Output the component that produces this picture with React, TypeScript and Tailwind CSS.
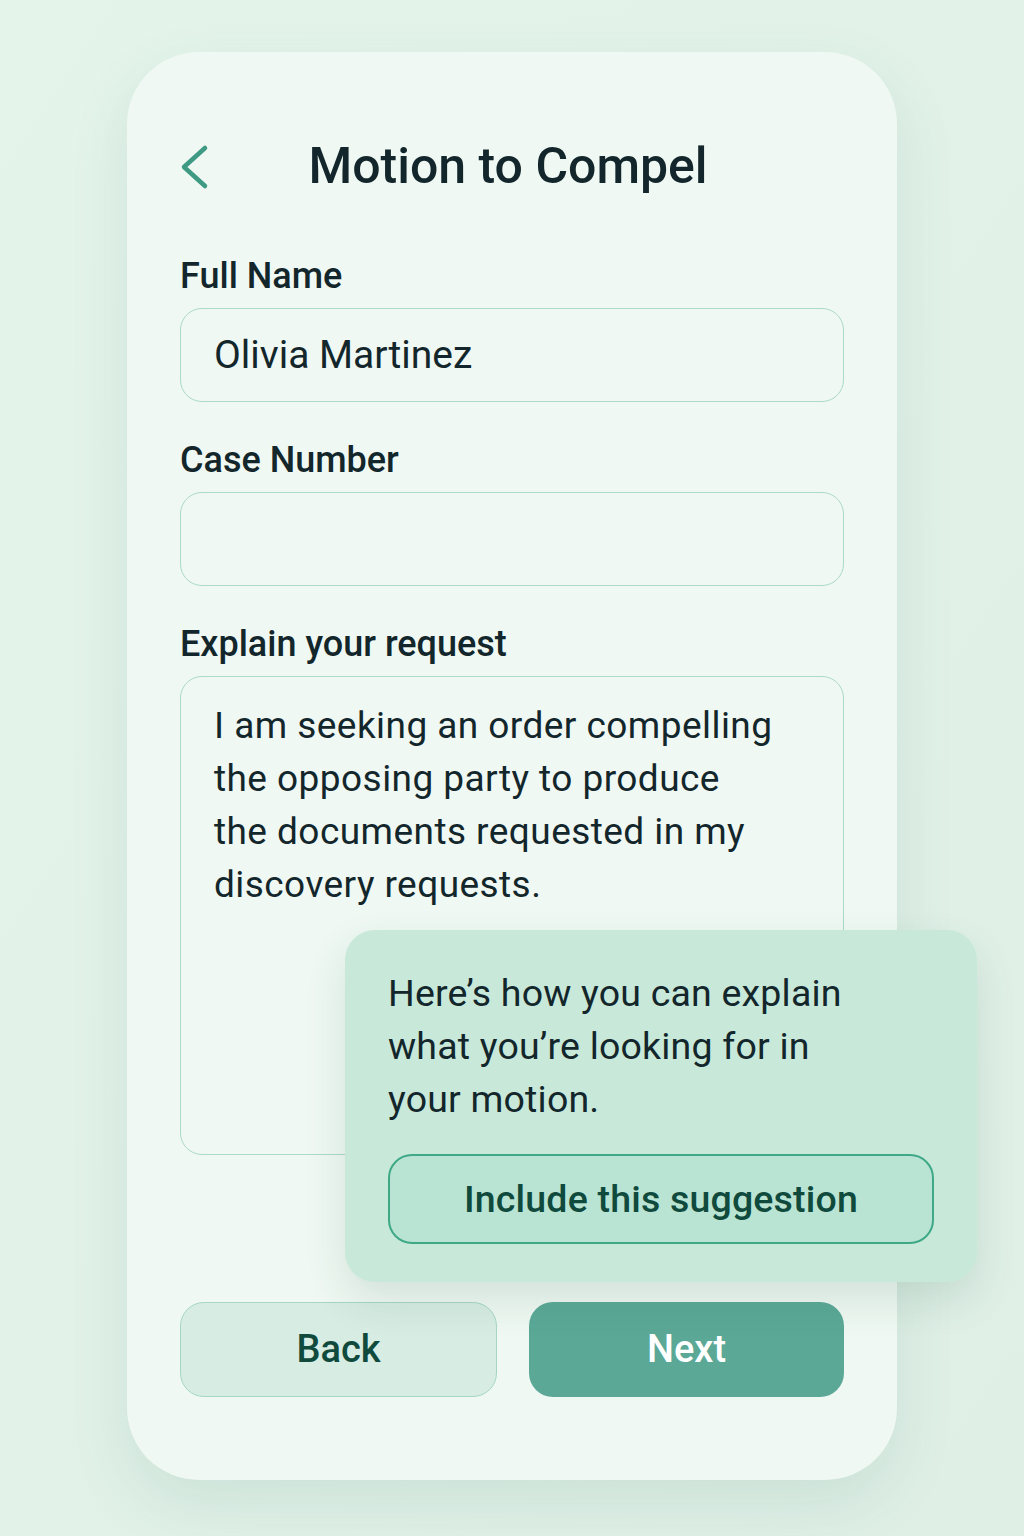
const Field = ({ label, children }: { label: string; children: React.ReactNode }) => (
  <div className="mt-[39px] first:mt-0">
    <div className="h-[38px] text-[36px] leading-[38px] font-medium text-[#13262b]">{label}</div>
    <div className="mt-[13px]">{children}</div>
  </div>
)

const App = () => {
  const request = [
    "I am seeking an order compelling",
    "the opposing party to produce",
    "the documents requested in my",
    "discovery requests.",
  ]
  const tip = ["Here’s how you can explain", "what you’re looking for in", "your motion."]

  return (
    <div
      className="min-h-[1536px] w-full bg-gradient-to-br from-[#e4f4eb] to-[#dfefe6] pt-[52px]"
      style={{ fontFamily: "Roboto, 'Liberation Sans', sans-serif" }}
    >
      <div className="mx-auto w-[770px] h-[1428px] rounded-[72px] bg-[#eff8f2] px-[53px] pt-[88px] shadow-[0_24px_60px_rgba(60,120,100,0.12)]">
        <div className="relative h-[52px] flex items-center justify-center">
          <svg className="absolute left-0 top-[4px]" width="30" height="46" viewBox="0 0 30 46" fill="none">
            <polyline
              points="25,4 4,23 25,42"
              stroke="#3e9a83"
              strokeWidth="4.5"
              strokeLinecap="round"
              strokeLinejoin="round"
            />
          </svg>
          <h1 className="text-[50px] leading-[52px] font-medium text-[#13262b] -translate-x-[4px]">Motion to Compel</h1>
        </div>

        <div className="mt-[65px]">
          <Field label="Full Name">
            <div className="h-[94px] rounded-[22px] border-[1.5px] border-[#acd9c8] bg-[#eff8f3] px-[33px] flex items-center text-[39px] text-[#13262b]">
              Olivia Martinez
            </div>
          </Field>
          <Field label="Case Number">
            <div className="h-[94px] rounded-[22px] border-[1.5px] border-[#acd9c8] bg-[#eff8f3]" />
          </Field>
          <Field label="Explain your request">
            <div className="relative">
              <div className="h-[479px] rounded-[22px] border-[1.5px] border-[#acd9c8] bg-[#eff8f3] px-[33px] pt-[22px] text-[37px] leading-[53px] text-[#13262b] tracking-[0.012em]">
                {request.map((line, i) => (
                  <div key={i}>{line}</div>
                ))}
              </div>

              <div className="absolute left-[165px] top-[254px] w-[632px] rounded-[30px] bg-[#c8e9da] px-[43px] pt-[37px] pb-[38px] shadow-[0_18px_40px_rgba(40,100,80,0.14)]">
                <div className="text-[37.5px] leading-[53px] text-[#13262b] tracking-[0.005em]">
                  {tip.map((line, i) => (
                    <div key={i}>{line}</div>
                  ))}
                </div>
                <button className="mt-[28px] w-full h-[90px] rounded-[24px] border-2 border-[#3ea887] bg-[#b9e4d3] text-[37.5px] font-medium text-[#0f4a3d] tracking-[0.005em]">
                  Include this suggestion
                </button>
              </div>
            </div>
          </Field>
        </div>

        <div className="mt-[147px] flex gap-[32px]">
          <button className="flex-1 h-[95px] rounded-[24px] border-[1.5px] border-[#a6d7c4] bg-[#d7ece3] text-[38px] font-medium text-[#0f4a3d]">
            Back
          </button>
          <button className="flex-1 h-[95px] rounded-[24px] bg-[#5ba897] text-[38px] font-medium text-white">
            Next
          </button>
        </div>
      </div>
    </div>
  )
}

export default App
